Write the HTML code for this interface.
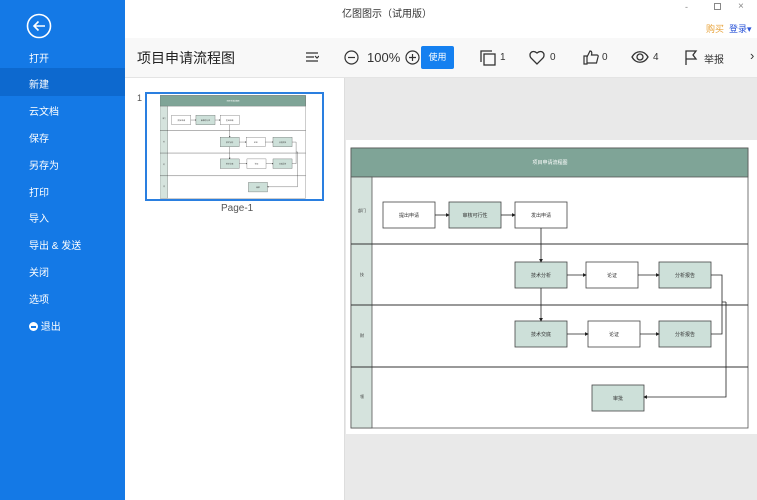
<!DOCTYPE html>
<html><head><meta charset="utf-8"><style>
*{margin:0;padding:0;box-sizing:border-box}
body{width:757px;height:500px;overflow:hidden;font-family:"Liberation Sans","Noto Sans CJK SC",sans-serif;background:#fff;position:relative}
#side{position:absolute;left:0;top:0;width:125px;height:500px;background:#1479e6}
.mi{position:absolute;left:29px;font-size:10px;color:#fff}
#sel{position:absolute;left:0;top:68px;width:125px;height:28px;background:#0d69cf}
#top{position:absolute;left:125px;top:0;width:632px;height:38px;background:#fff}
#tool{position:absolute;left:125px;top:38px;width:632px;height:40px;background:#f8f8f8;border-bottom:1px solid #e4e4e4}
.t{position:absolute;font-size:11px;color:#333}
#thumbs{position:absolute;left:125px;top:78px;width:219px;height:422px;background:#fff}
#canvas{position:absolute;left:344px;top:78px;width:413px;height:422px;background:#e9e9e9;border-left:1px solid #ddd}
#page{position:absolute;left:1px;top:62px;width:412px;height:294px;background:#fff}
</style></head><body>
<div id="side">
<svg style="position:absolute;left:26px;top:13px" width="26" height="26" viewBox="0 0 26 26"><circle cx="13" cy="13" r="11.5" fill="none" stroke="#fff" stroke-width="1.6"/><path d="M19 13H8M12.5 8.5L8 13l4.5 4.5" fill="none" stroke="#fff" stroke-width="1.6"/></svg>
<div id="sel"></div>
<div class="mi" style="top:50px">打开</div>
<div class="mi" style="top:76px">新建</div>
<div class="mi" style="top:103px">云文档</div>
<div class="mi" style="top:130px">保存</div>
<div class="mi" style="top:157px">另存为</div>
<div class="mi" style="top:184px">打印</div>
<div class="mi" style="top:210px">导入</div>
<div class="mi" style="top:237px">导出 &amp; 发送</div>
<div class="mi" style="top:264px">关闭</div>
<div class="mi" style="top:291px">选项</div>
<div class="mi" style="top:318px;left:29px"><span style="display:inline-block;width:9px;height:9px;border-radius:50%;background:#fff;vertical-align:-1px;position:relative"><span style="position:absolute;left:2px;top:4px;width:5px;height:1.5px;background:#1479e6"></span></span> 退出</div>
</div>
<div id="top">
<div class="t" style="left:217px;top:5px;font-size:10px">亿图图示（试用版）</div>
<div class="t" style="left:560px;top:2px;font-size:9px;color:#888">-</div>
<div class="t" style="left:589px;top:3px;width:7px;height:7px;border:1px solid #888"></div>
<div class="t" style="left:613px;top:1px;font-size:10px;color:#888">×</div>
<div class="t" style="left:581px;top:22px;font-size:9px;color:#e8a33a">购买</div>
<div class="t" style="left:604px;top:22px;font-size:9px;color:#2b55d8">登录▾</div>
</div>
<div id="tool">
<div class="t" style="left:12px;top:10px;font-size:14px;color:#222">项目申请流程图</div>
<svg style="position:absolute;left:180px;top:13px" width="14" height="12"><path d="M1 2h12M1 6h8M1 10h12M10 5l2 2 2-2" stroke="#333" fill="none" stroke-width="1.2"/></svg>
<svg style="position:absolute;left:219px;top:12px" width="15" height="15"><circle cx="7.5" cy="7.5" r="6.5" fill="none" stroke="#333" stroke-width="1.2"/><path d="M4 7.5h7" stroke="#333" stroke-width="1.2"/></svg>
<div class="t" style="left:242px;top:12px;font-size:13px">100%</div>
<svg style="position:absolute;left:280px;top:12px" width="15" height="15"><circle cx="7.5" cy="7.5" r="6.5" fill="none" stroke="#333" stroke-width="1.2"/><path d="M4 7.5h7M7.5 4v7" stroke="#333" stroke-width="1.2"/></svg>
<div style="position:absolute;left:296px;top:8px;width:33px;height:23px;background:#1580f0;border-radius:2px;color:#fff;font-size:9px;text-align:center;line-height:23px">使用</div>
<svg style="position:absolute;left:355px;top:12px" width="16" height="16"><rect x="4" y="4" width="11" height="11" fill="none" stroke="#333" stroke-width="1.3"/><path d="M1 12V1h11" fill="none" stroke="#333" stroke-width="1.3"/></svg>
<div class="t" style="left:375px;top:14px;font-size:10px">1</div>
<svg style="position:absolute;left:404px;top:12px" width="16" height="15"><path d="M8 14L2 8C-1 4 3-1 8 3c5-4 9 1 6 5z" fill="none" stroke="#333" stroke-width="1.3"/></svg>
<div class="t" style="left:425px;top:14px;font-size:10px">0</div>
<svg style="position:absolute;left:458px;top:11px" width="16" height="16"><path d="M1 7h3v8H1zM4 8l3-6c2 0 2 2 1.5 4H14c1 0 1.5 1 1 2l-1.5 6H4" fill="none" stroke="#333" stroke-width="1.2"/></svg>
<div class="t" style="left:477px;top:14px;font-size:10px">0</div>
<svg style="position:absolute;left:506px;top:12px" width="18" height="14"><path d="M1 7C5 0 13 0 17 7 13 14 5 14 1 7z" fill="none" stroke="#333" stroke-width="1.3"/><circle cx="9" cy="7" r="3" fill="none" stroke="#333" stroke-width="1.3"/></svg>
<div class="t" style="left:528px;top:14px;font-size:10px">4</div>
<svg style="position:absolute;left:559px;top:12px" width="14" height="16"><path d="M2 15V1h10l-3 4 3 4H2" fill="none" stroke="#333" stroke-width="1.3"/></svg>
<div class="t" style="left:579px;top:13px;font-size:10px">举报</div>
<div class="t" style="left:625px;top:10px;font-size:13px">›</div>
</div>
<div id="thumbs">
<div class="t" style="left:12px;top:15px;font-size:9px;color:#555">1</div>
<div style="position:absolute;left:20px;top:14px;width:179px;height:109px;border:2px solid #2a7fe0;background:#fff"></div>
<svg style="position:absolute;left:35px;top:17px" width="146" height="104" viewBox="351 147 398 283">
<g id="dg2" font-family="Liberation Sans,Noto Sans CJK SC,sans-serif" font-size="5" text-anchor="middle"></g>
</svg>
<div class="t" style="left:96px;top:125px;font-size:10px;color:#555">Page-1</div>
</div>
<div id="canvas"><div id="page"></div></div>
<svg style="position:absolute;left:0;top:0" width="757" height="500">
<defs><marker id="a" markerWidth="5" markerHeight="5" refX="4" refY="2.5" orient="auto"><path d="M0 0L5 2.5 0 5z" fill="#222"/></marker></defs>
<g id="dg" font-family="Liberation Sans,Noto Sans CJK SC,sans-serif" font-size="5" text-anchor="middle">
<rect x="351" y="148" width="397" height="280" fill="#fff" stroke="#555" stroke-width="0.8"/>
<rect x="351" y="148" width="397" height="29" fill="#7fa497" stroke="#555" stroke-width="0.8"/>
<text x="550" y="164" fill="#fff">项目申请流程图</text>
<rect x="351" y="177" width="21" height="251" fill="#d5e3dd" stroke="#555" stroke-width="0.8"/>
<path d="M351 244H748M351 305H748M351 367H748" stroke="#333" stroke-width="1"/>
<g stroke="#444" stroke-width="0.8">
<rect x="383" y="202" width="52" height="26" fill="#fff"/>
<rect x="449" y="202" width="52" height="26" fill="#cde0d9"/>
<rect x="515" y="202" width="52" height="26" fill="#fff"/>
<rect x="515" y="262" width="52" height="26" fill="#cde0d9"/>
<rect x="586" y="262" width="52" height="26" fill="#fff"/>
<rect x="659" y="262" width="52" height="26" fill="#cde0d9"/>
<rect x="515" y="321" width="52" height="26" fill="#cde0d9"/>
<rect x="588" y="321" width="52" height="26" fill="#fff"/>
<rect x="659" y="321" width="52" height="26" fill="#cde0d9"/>
<rect x="592" y="385" width="52" height="26" fill="#cde0d9"/>
</g>
<g stroke="#222" stroke-width="0.8" fill="none" marker-end="url(#a)">
<path d="M435 215H449"/><path d="M501 215H515"/>
<path d="M541 228V262"/><path d="M541 288V321"/>
<path d="M567 275H586"/><path d="M638 275H659"/>
<path d="M567 334H588"/><path d="M640 334H659"/>
<path d="M726 302V397H644"/>
</g>
<path d="M711 275H722V334H711M722 302H726" stroke="#222" stroke-width="0.8" fill="none"/>
<g fill="#333">
<text x="409" y="217">提出申请</text><text x="475" y="217">审核可行性</text><text x="541" y="217">发出申请</text>
<text x="541" y="277">技术分析</text><text x="612" y="277">论证</text><text x="685" y="277">分析报告</text>
<text x="541" y="336">技术交底</text><text x="614" y="336">论证</text><text x="685" y="336">分析报告</text>
<text x="618" y="400">审批</text>
<text x="362" y="212" font-size="4">部门</text>
<text x="362" y="276" font-size="4">技</text><text x="362" y="337" font-size="4">财</text><text x="362" y="398" font-size="4">领</text>
</g>
</g>
</svg>
<script>document.getElementById('dg2').innerHTML=document.getElementById('dg').innerHTML;</script>
</body></html>
